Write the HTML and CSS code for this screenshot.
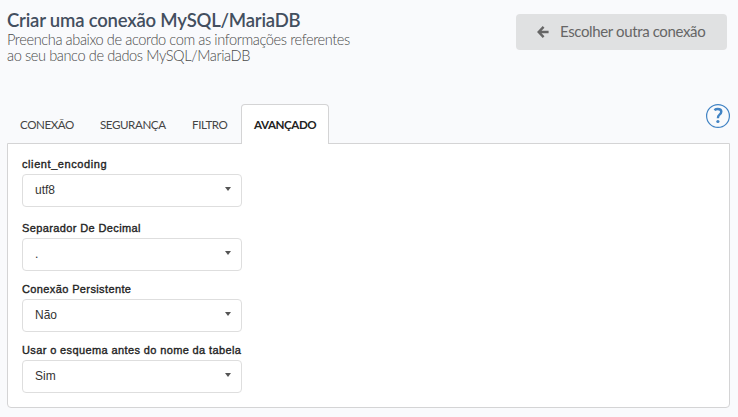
FILE: index.html
```html
<!DOCTYPE html>
<html lang="pt-BR">
<head>
<meta charset="utf-8">
<title>Criar uma conexão MySQL/MariaDB</title>
<link rel="stylesheet" href="styles.css">
</head>
<body>
<header class="header">
  <div class="heading">
    <h1 class="title">Criar uma conexão MySQL/MariaDB</h1>
    <p class="subtitle">Preencha abaixo de acordo com as informações referentes<br>ao seu banco de dados MySQL/MariaDB</p>
  </div>
  <button class="back" type="button">
    <svg class="arrow" width="12" height="12" viewBox="0 0 12 12"><path d="M6.6.9 1.7 6l4.9 5.1M2 6h9.6" fill="none" stroke="currentColor" stroke-width="2.4"/></svg>
    <span>Escolher outra conexão</span>
  </button>
</header>
<nav class="tabs">
  <a class="tab tab-connection">CONEXÃO</a>
  <a class="tab tab-security">SEGURANÇA</a>
  <a class="tab tab-filter">FILTRO</a>
  <a class="tab active">AVANÇADO</a>
  <svg class="help" width="24" height="24" viewBox="0 0 24 24"><circle cx="12" cy="12" r="11.4" fill="none" stroke="currentColor" stroke-width="1.2"/><path d="M8.4 6.1C9.4 5.3 10.5 5 11.8 5c2.2 0 3.5 1.1 3.5 2.8 0 1.6-.9 2.3-2 3.1-1.1.8-1.4 1.5-1.4 3.3" fill="none" stroke="currentColor" stroke-width="2.4"/><circle cx="11.9" cy="17.5" r="1.6" fill="currentColor"/></svg>
</nav>
<main class="panel">
  <div class="field field-encoding"><label class="label">client_encoding</label><div class="select">utf8<i class="caret"></i></div></div>
  <div class="field"><label class="label">Separador De Decimal</label><div class="select">.<i class="caret"></i></div></div>
  <div class="field"><label class="label">Conexão Persistente</label><div class="select">Não<i class="caret"></i></div></div>
  <div class="field"><label class="label">Usar o esquema antes do nome da tabela</label><div class="select">Sim<i class="caret"></i></div></div>
</main>
</body>
</html>
```
FILE: styles.css
```css
* { box-sizing: border-box; }
body { margin: 0; height: 417px; overflow: hidden; background: #f9fafc; font-family: Lato, sans-serif; }
.header { display: flex; justify-content: space-between; height: 104px; padding: 9px 11px 0 7px; }
.title { margin: 0; font-size: 18.5px; line-height: 23px; font-weight: 600; letter-spacing: -.2px; color: #434f5f; white-space: nowrap; }
.subtitle { margin: 0; font-size: 14.6px; line-height: 16px; font-weight: 300; letter-spacing: -.4px; color: #4a4a4a; white-space: nowrap; }
.back { display: flex; align-items: center; width: 211px; height: 36px; margin-top: 5px; padding: 0 0 2px 21px; border: 0; border-radius: 4px; background: #e0e1e2; color: #666; font: 400 15px Lato, sans-serif; letter-spacing: -.37px; white-space: nowrap; }
.arrow { margin: 2px 11px 0 0; }
.tabs { display: flex; height: 40px; margin: 0 8px 0 7px; position: relative; z-index: 1; }
.tab { display: flex; align-items: center; height: 40px; padding: 1px 0 0 13px; font-size: 11.6px; letter-spacing: -.42px; color: #444; white-space: nowrap; }
.tab-connection { width: 80px; }
.tab-security { width: 92px; }
.tab-filter { width: 62px; }
.active { width: 88px; padding: 0 0 0 12px; border: 1px solid #d4d4d5; border-bottom: 0; border-radius: 4px 4px 0 0; background: #fff; font-weight: 700; color: #222; }
.help { margin-left: auto; color: #4183c4; }
.panel { width: 723px; height: 265px; margin: -1px 0 0 7px; padding: 13px 14px; border: 1px solid #d4d4d5; border-radius: 0 0 4px 4px; background: #fff; }
.field { width: 220px; height: 61px; }
.field-encoding { height: 64px; }
.label { display: block; height: 17px; font: 400 11px/15px "Liberation Sans", sans-serif; letter-spacing: .38px; -webkit-text-stroke: .35px #222; color: #222; white-space: nowrap; }
.field-encoding .label { letter-spacing: .58px; }
.select { display: flex; align-items: center; justify-content: space-between; height: 33px; padding: 0 10px 2px 12px; border: 1px solid #dedede; border-radius: 4px; font: 12px "Liberation Sans", sans-serif; color: #333; }
.caret { width: 0; height: 0; margin-bottom: 2px; border: 3px solid transparent; border-top: 4px solid #555; border-bottom: 0; }
```
